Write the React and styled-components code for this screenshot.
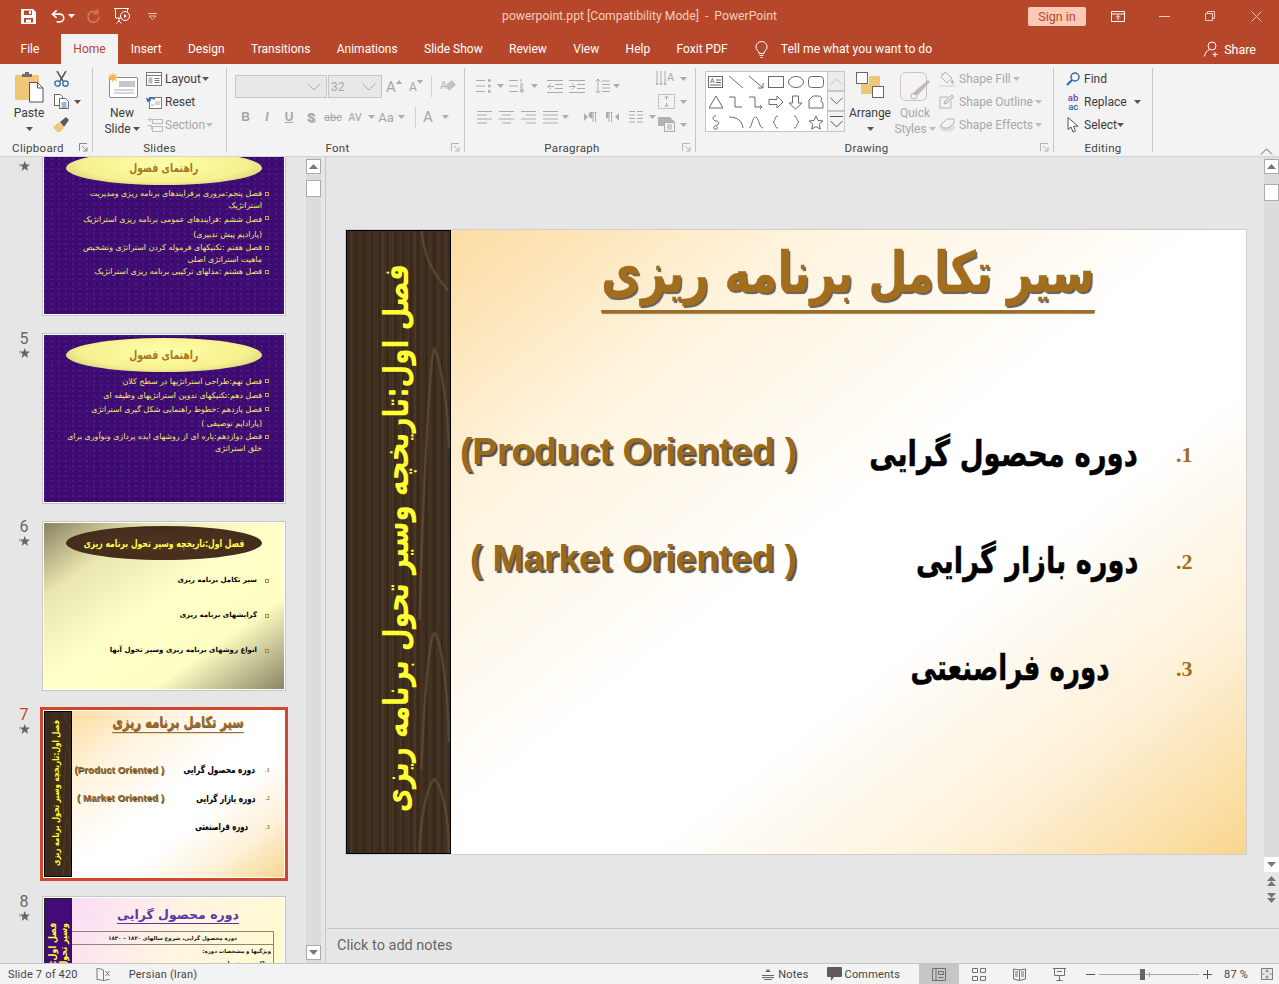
import React from 'react';
import styled, { createGlobalStyle } from 'styled-components';

const ACCENT = '#b7472a';
const PANEL = '#e6e6e6';
const LINE = '#c6c6c6';
const UI_FONT = 'Roboto, "Open Sans", "Liberation Sans", sans-serif';
const FA_FONT = '"DejaVu Sans", "Liberation Sans", sans-serif';

const Global = createGlobalStyle`
  html, body { margin: 0; height: 100%; overflow: hidden; }
  body { font-family: ${UI_FONT}; font-size: 12px; color: #3c3c3c; }
  #root { height: 100%; }
`;

const Page = styled.div`
  display: flex;
  flex-direction: column;
  height: 100vh;
  width: 100vw;
  overflow: hidden;
`;

/* ---------- title bar ---------- */
const TitleBar = styled.div`
  display: grid;
  grid-template-columns: 1fr auto 1fr;
  align-items: center;
  height: 32px;
  flex: 0 0 32px;
  background: ${ACCENT};
`;
const Qat = styled.div`
  display: flex;
  align-items: center;
  padding-left: 21px;
`;
const QatItem = styled.div`
  display: flex;
  align-items: center;
  justify-content: center;
  width: ${p => p.$w}px;
  margin-left: ${p => p.$ml ?? 0}px;
`;
const DocTitle = styled.div`
  color: #f6cdbd;
  font-size: 12.2px;
  white-space: pre;
`;
const WinControls = styled.div`
  display: flex;
  align-items: center;
  justify-content: flex-end;
`;
const SignIn = styled.div`
  width: 58px;
  height: 19px;
  line-height: 19px;
  text-align: center;
  background: #fcc9b6;
  color: ${ACCENT};
  border-radius: 2px;
  font-size: 12.5px;
  margin-right: 9px;
`;
const WinButton = styled.div`
  width: 46px;
  display: flex;
  justify-content: center;
`;

/* ---------- tabs ---------- */
const TabRow = styled.div`
  display: flex;
  align-items: flex-end;
  height: 32px;
  flex: 0 0 32px;
  background: ${ACCENT};
  padding-left: 7px;
`;
const Tab = styled.div`
  height: 30px;
  line-height: 30px;
  padding: 0 ${p => p.$pad ?? 13.2}px;
  margin-right: ${p => p.$mr ?? 0}px;
  color: ${p => (p.$active ? ACCENT : '#fff')};
  background: ${p => (p.$active ? '#f3f3f3' : 'transparent')};
  font-size: 12px;
  white-space: nowrap;
`;
const TellMe = styled.div`
  display: flex;
  align-items: center;
  gap: 13px;
  height: 30px;
  margin-left: 14px;
  color: #fff;
  font-size: 12.2px;
`;
const Share = styled.div`
  display: flex;
  align-items: center;
  gap: 5px;
  height: 30px;
  margin-left: auto;
  padding-right: 23px;
  color: #fff;
  font-size: 12.5px;
`;

/* ---------- ribbon ---------- */
const Ribbon = styled.div`
  display: flex;
  height: 93px;
  flex: 0 0 93px;
  background: #f3f3f3;
  border-bottom: 1px solid #d4d4d4;
  box-sizing: border-box;
`;
const Group = styled.div`
  display: flex;
  flex-direction: column;
  width: ${p => p.$w}px;
  flex: 0 0 auto;
`;
const GroupBody = styled.div`
  display: flex;
  height: 76px;
  padding-left: ${p => p.$pl ?? 0}px;
`;
const GroupLabel = styled.div`
  display: flex;
  align-items: center;
  justify-content: center;
  height: 16px;
  position: relative;
  padding-right: ${p => (p.$launch ? 16 : 0)}px;
  font-size: 11.5px;
  letter-spacing: 0.3px;
  color: #444;
`;
const Launcher = styled.svg`
  position: absolute;
  right: 4px;
  top: 3px;
`;
const Sep = styled.div`
  width: 1px;
  height: 84px;
  margin-top: 4px;
  background: ${LINE};
  flex: 0 0 auto;
`;
const Collapse = styled.div`
  margin-left: auto;
  align-self: flex-end;
  padding: 0 6px 1px 0;
  line-height: 0;
`;
const BigButton = styled.div`
  display: flex;
  flex-direction: column;
  align-items: center;
  width: ${p => p.$w}px;
  margin-left: ${p => p.$ml ?? 0}px;
  padding-top: 8px;
  color: ${p => (p.$off ? '#a8a8a8' : '#3c3c3c')};
`;
const BigIcon = styled.div`
  height: 33px;
  display: flex;
  align-items: flex-start;
  justify-content: center;
`;
const BigText = styled.div`
  height: 16px;
  line-height: 16px;
  display: flex;
  align-items: center;
  gap: 2px;
  white-space: nowrap;
`;
const SmallCol = styled.div`
  display: flex;
  flex-direction: column;
  padding-top: 3px;
  margin-left: ${p => p.$ml ?? 0}px;
`;
const SmallBtn = styled.div`
  display: flex;
  align-items: center;
  height: 23px;
  gap: ${p => p.$gap ?? 3}px;
  color: ${p => (p.$off ? '#a8a8a8' : '#3c3c3c')};
  white-space: nowrap;
`;
const SmallIcon = styled.span`
  display: flex;
  justify-content: center;
  width: ${p => p.$w ?? 20}px;
`;
const Rows = styled.div`
  display: flex;
  flex-direction: column;
  padding-top: ${p => p.$top}px;
  width: ${p => p.$w}px;
`;
const ToolRow = styled.div`
  display: flex;
  align-items: center;
  height: ${p => p.$h ?? 22}px;
  margin-bottom: ${p => p.$mb ?? 0}px;
`;
const Combo = styled.div`
  display: flex;
  align-items: center;
  justify-content: flex-end;
  box-sizing: border-box;
  width: ${p => p.$w}px;
  height: 23px;
  margin-right: 1px;
  padding-right: 5px;
  background: #e8e8e8;
  border: 1px solid ${LINE};
  color: #a8a8a8;
`;
const ComboValue = styled.span`
  margin-right: auto;
  padding-left: 2px;
`;
const Cell = styled.div`
  display: flex;
  align-items: center;
  justify-content: center;
  width: ${p => p.$w}px;
  margin-left: ${p => p.$ml ?? 0}px;
  color: #a6a6a6;
  font-size: ${p => p.$fs ?? 12}px;
  font-weight: ${p => (p.$bold ? 700 : 400)};
  font-style: ${p => (p.$italic ? 'italic' : 'normal')};
  text-decoration: ${p => p.$deco ?? 'none'};
  font-family: ${p => (p.$serif ? '"Liberation Sans", sans-serif' : 'inherit')};
  text-shadow: ${p => (p.$shadow ? '1px 1px 1px #bbb' : 'none')};
`;
const RowRule = styled.div`
  width: 1px;
  height: 21px;
  background: #d0d0d0;
  margin-left: ${p => p.$ml ?? 0}px;
`;
const Gallery = styled.div`
  display: flex;
  height: 61px;
  margin-top: 7px;
`;
const GalleryGrid = styled.div`
  display: grid;
  grid-template-columns: repeat(6, 20px);
  grid-auto-rows: 20px;
  box-sizing: border-box;
  width: 123px;
  height: 61px;
  background: #fff;
  border: 1px solid ${LINE};
  place-items: center;
`;
const GalleryArrows = styled.div`
  display: flex;
  flex-direction: column;
  width: 17px;
`;
const GalleryArrow = styled.div`
  display: flex;
  align-items: center;
  justify-content: center;
  box-sizing: border-box;
  height: ${p => p.$h}px;
  background: ${p => (p.$dim ? '#ececec' : '#f3f3f3')};
  border: 1px solid ${LINE};
  border-left-width: 0;
`;
const AbIcon = styled.span`
  display: flex;
  flex-direction: column;
  align-items: flex-end;
  font-size: 9.5px;
  line-height: 9px;
  font-weight: 500;
  color: #7a3f9a;
`;
const AcText = styled.span`
  color: #2b6cb0;
`;

/* ---------- main ---------- */
const Workspace = styled.div`
  display: flex;
  flex: 1 1 auto;
  min-height: 0;
  background: ${PANEL};
`;
const SlidePanel = styled.div`
  display: flex;
  width: 326px;
  flex: 0 0 326px;
  box-sizing: border-box;
  border-right: 1px solid ${LINE};
  padding-right: 4px;
  margin-right: 1px;
`;
const ThumbList = styled.div`
  flex: 1 1 auto;
  overflow: hidden;
  min-width: 0;
`;
const ThumbInner = styled.div`
  margin-top: -10.5px;
`;
const ThumbRow = styled.div`
  display: flex;
  height: 187.7px;
`;
const NumCol = styled.div`
  display: flex;
  flex-direction: column;
  align-items: center;
  width: 43px;
  flex: 0 0 43px;
  box-sizing: border-box;
  padding-left: 5px;
  color: ${p => (p.$active ? '#c8452a' : '#666')};
  font-size: 16px;
  line-height: 18px;
  margin-top: -4px;
`;
const NumStar = styled.svg`
  flex: 0 0 auto;
`;
const ThumbFrame = styled.div`
  width: 240px;
  height: 166.4px;
  border: 1px solid #fff;
  box-shadow: 0 0 0 ${p => (p.$active ? '3px #d0472b' : `1px ${LINE}`)};
  overflow: hidden;
  flex: 0 0 auto;
`;
const VScroll = styled.div`
  display: flex;
  flex-direction: column;
  align-items: center;
  width: 15px;
  flex: 0 0 15px;
  padding: 2px 0 3px;
  box-sizing: border-box;
  background: #dcdcdc;
`;
const ScrollBtn = styled.div`
  display: flex;
  align-items: center;
  justify-content: center;
  box-sizing: border-box;
  width: 15px;
  height: 15px;
  background: #fff;
  border: 1px solid ${p => (p.$plain ? '#fff' : '#ababab')};
  flex: 0 0 auto;
`;
const ScrollThumb = styled.div`
  box-sizing: border-box;
  width: 15px;
  height: 17px;
  margin-top: ${p => p.$mt}px;
  background: #fff;
  border: 1px solid #ababab;
`;
const ScrollSpace = styled.div`
  flex: 1 1 auto;
`;
const StepBtn = styled.div`
  display: flex;
  justify-content: center;
  align-items: center;
  width: 15px;
  height: 17px;
  background: ${PANEL};
`;
const EditorCol = styled.div`
  display: flex;
  flex-direction: column;
  flex: 1 1 auto;
  min-width: 0;
`;
const EditorTop = styled.div`
  display: flex;
  height: 771px;
  flex: 0 0 771px;
`;
const SlideArea = styled.div`
  flex: 1 1 auto;
  padding: 73px 0 0 19px;
`;
const StepBar = styled.div`
  display: flex;
  flex-direction: column;
  width: 15px;
  flex: 0 0 15px;
`;
const ScrollTrack = styled.div`
  display: flex;
  flex-direction: column;
  align-items: center;
  height: 715px;
  padding-top: 2px;
  box-sizing: border-box;
  background: #dcdcdc;
`;
const NotesBar = styled.div`
  flex: 1 1 auto;
  border-top: 1px solid ${LINE};
  padding: 8px 0 0 10px;
  font-size: 14.5px;
  color: #666;
`;

/* ---------- slide ---------- */
const SlideBox = styled.div`
  display: flex;
  width: 900px;
  height: 624px;
  background: #fff;
  box-shadow: 0 0 0 1px #cfcfcf;
  zoom: ${p => p.$zoom ?? 1};
`;
const WoodBand = styled.div`
  position: relative;
  display: flex;
  justify-content: center;
  box-sizing: border-box;
  width: 105px;
  height: 624px;
  flex: 0 0 105px;
  border: 1px solid #000;
  background: #3d2c1d;
  overflow: hidden;
`;
const WoodArt = styled.svg`
  position: absolute;
  inset: 0;
  width: 100%;
  height: 100%;
`;
/* the source font is a condensed one: DejaVu gets squeezed along the line */
const SideSqueeze = styled.div`
  position: relative;
  align-self: flex-start;
  margin-top: ${p => p.$top}px;
  margin-right: ${p => p.$mr ?? 0}px;
  transform-origin: top center;
  transform: scaleY(${p => p.$sy});
`;
const SideText = styled.div`
  writing-mode: vertical-rl;
  transform: rotate(180deg);
  direction: rtl;
  white-space: nowrap;
  font: 700 ${p => p.$fs}px/1.1 ${FA_FONT};
  color: #ffff33;
`;
const SlideBody = styled.div`
  flex: 0 0 795px;
  width: 795px;
  min-width: 0;
  display: flex;
  flex-direction: column;
  background: linear-gradient(142deg, #fcdca2 0%, #fff3dc 22%, #ffffff 48%, #ffffff 62%, #fdf0d6 82%, #f9d68e 100%);
`;
const TitleWrap = styled.div`
  display: flex;
  justify-content: flex-end;
  height: 171.5px;
  padding-right: 151px;
  box-sizing: border-box;
`;
const SlideTitle = styled.div`
  height: 80px;
  border-bottom: 3px solid #a26d1c;
  box-shadow: 0 2px 1px -1px rgba(0, 0, 0, 0.45);
  transform-origin: right center;
  transform: scaleX(0.775);
  font: 700 56px/86px ${FA_FONT};
  -webkit-text-stroke: 0.5px #a26d1c;
  color: #a26d1c;
  text-shadow: 2px 2px 1px #5f5f5f;
  white-space: nowrap;
`;
const TopicRow = styled.div`
  display: flex;
  align-items: center;
  height: 107px;
  padding-left: ${p => p.$pl ?? 0}px;
  padding-right: 54px;
`;
const TopicEn = styled.div`
  margin-bottom: 8px;
  font: 700 37px/1 "Liberation Sans", Arial, sans-serif;
  color: #9a6a1c;
  text-shadow: 2px 2px 1px #4d4d4d;
  white-space: nowrap;
  flex: 0 0 auto;
`;
const TopicFa = styled.div`
  flex: 0 1 auto;
  min-width: 0;
  margin-left: auto;
  margin-right: ${p => p.$mr}px;
  margin-bottom: 3px;
  transform-origin: right center;
  transform: scaleX(${p => p.$sx});
  font: 700 36px/1 ${FA_FONT};
  -webkit-text-stroke: 0.5px #000;
  color: #000;
  text-shadow: 1px 1px 1px #fff;
  white-space: nowrap;
`;
const TopicNum = styled.div`
  width: 16px;
  flex: 0 0 16px;
  font: 700 22px/1 "Liberation Serif", serif;
  color: #a26d1c;
`;

/* ---------- small thumbnails ---------- */
const MiniSlide = styled.div`
  display: flex;
  flex-direction: column;
  align-items: center;
  width: 240px;
  height: 166.4px;
  padding-top: 3px;
  box-sizing: border-box;
  background: ${p => p.$bg};
`;
const Ellipse = styled.div`
  display: flex;
  align-items: center;
  justify-content: center;
  width: 196px;
  height: 34px;
  flex: 0 0 auto;
  border-radius: 50%;
  background: ${p => p.$bg};
  color: ${p => p.$color};
  font: 700 ${p => p.$fs}px/1 ${FA_FONT};
  white-space: nowrap;
`;
const EllipseText = styled.span`
  display: inline-block;
  transform: scaleX(${p => p.$sx});
`;
const BulletList = styled.div`
  align-self: stretch;
  display: flex;
  flex-direction: column;
  padding: ${p => p.$top}px 15px 0 0;
  gap: ${p => p.$gap ?? 0}px;
`;
const BulletItem = styled.div`
  display: flex;
  align-items: flex-start;
  gap: ${p => p.$gap ?? 3}px;
  color: ${p => p.$color};
  font: ${p => (p.$bold ? 700 : 400)} ${p => p.$fs}px/${p => p.$lh}px ${FA_FONT};
  white-space: nowrap;
`;
const BulletMark = styled.span`
  width: 2px;
  height: 2px;
  border: 1px solid ${p => p.$color};
  margin-top: ${p => p.$mt ?? 4}px;
  flex: 0 0 auto;
`;
const BulletText = styled.div`
  display: flex;
  flex-direction: column;
`;
const PurpleBand = styled.div`
  display: flex;
  justify-content: center;
  box-sizing: border-box;
  width: 28px;
  height: 166px;
  flex: 0 0 28px;
  border: 1px solid #222;
  background: #430a78;
  overflow: hidden;
`;
const Mini8Body = styled.div`
  flex: 1 1 auto;
  display: flex;
  flex-direction: column;
  align-items: center;
  background: linear-gradient(120deg, #fbdcf7 0%, #fff4e2 40%, #ffffc4 100%);
`;
const Mini8Title = styled.div`
  margin-top: 8px;
  border-bottom: 1px solid #5a36a8;
  color: #5a36a8;
  font: 700 12.5px/17px ${FA_FONT};
  white-space: nowrap;
`;
const Mini8Table = styled.div`
  align-self: stretch;
  margin: 7px 10px 0 0;
  border: 1px solid #8a8576;
  border-left: 0;
  color: #111;
  font: 700 5.4px/10px ${FA_FONT};
`;
const Mini8Cell = styled.div`
  text-align: ${p => p.$align ?? 'center'};
  padding: 1px 2px;
  border-top: ${p => (p.$rule ? '1px solid #8a8576' : '0')};
  white-space: nowrap;
`;
const Mini8Row = styled.div`
  display: flex;
  width: 240px;
  height: 166.4px;
  background: #fff;
`;

/* ---------- status bar ---------- */
const StatusBar = styled.div`
  display: flex;
  align-items: center;
  height: 21px;
  flex: 0 0 21px;
  background: #f3f3f3;
  border-top: 1px solid ${LINE};
  box-sizing: border-box;
  font-size: 11px;
  color: #444;
  letter-spacing: 0.2px;
`;
const StatusText = styled.span`
  margin-left: ${p => p.$ml ?? 0}px;
  display: flex;
  align-items: center;
  gap: ${p => p.$gap ?? 0}px;
  white-space: nowrap;
`;
const StatusPush = styled.div`
  flex: 1 1 auto;
`;
const ViewGroup = styled.div`
  display: flex;
  height: 100%;
  margin-left: ${p => p.$ml}px;
`;
const ViewBtn = styled.div`
  display: flex;
  align-items: center;
  justify-content: center;
  width: 40px;
  height: 100%;
  background: ${p => (p.$on ? LINE : 'transparent')};
`;
const ZoomTrack = styled.div`
  position: relative;
  width: 100px;
  height: 1px;
  background: #a8a8a8;
  margin: 0 4px;
`;
const ZoomThumb = styled.div`
  position: absolute;
  left: 41px;
  top: -5px;
  width: 5px;
  height: 11px;
  background: #666;
`;
const ZoomTick = styled.div`
  position: absolute;
  left: 50px;
  top: -2px;
  width: 1px;
  height: 5px;
  background: #a8a8a8;
`;
const FitSlot = styled.span`
  display: flex;
  margin-left: 13px;
  padding-right: 6px;
`;

/* ---------- icons ---------- */
const Caret = ({ c = '#555', ml = 0 }) => (
  <svg width="7" height="4" style={{ marginLeft: ml, flex: 'none' }}><path d="M0 0h7L3.5 4z" fill={c} /></svg>
);
const Off = '#ababab';
const SaveIcon = () => (
  <svg width="15" height="15" viewBox="0 0 15 15"><path fillRule="evenodd" fill="#fff" d="M0 0h12l3 3v12H0zM3 1.5V6h8V1.5zM3 9v4.5h9V9zM8 2h2v3H8z" /><path fill="#fff" d="M5 10.5h5v3H5z" /></svg>
);
const UndoIcon = () => (
  <svg width="16" height="15" viewBox="0 0 16 15" fill="none" stroke="#fff" strokeWidth="1.7"><path d="M6 1L1.5 5 6 9" /><path d="M2 5h7.5a4 4 0 0 1 0 8.2H6" /></svg>
);
const RedoIcon = () => (
  <svg width="15" height="15" viewBox="0 0 15 15" fill="none" stroke="#cd7a63" strokeWidth="1.7"><path d="M11 3.5A5.5 5.5 0 1 0 13 8" /><path d="M11.5 0v4.3H7.2" /></svg>
);
const PresentIcon = () => (
  <svg width="17" height="18" viewBox="0 0 17 18" fill="none" stroke="#fff"><path d="M0 1.5h15M1.5 1.5v9.5h6M5 11v3M2.5 16.5L5 14l2.5 2.5M13.5 1.5v3" /><circle cx="11" cy="9" r="4.5" /><path d="M10 7l3 2-3 2z" fill="#fff" stroke="none" /></svg>
);
const CustomizeIcon = () => (
  <svg width="9" height="7" viewBox="0 0 9 7" fill="none" stroke="#f0bfae"><path d="M0 .5h9M1 3l3.5 3.5L8 3z" /></svg>
);
const WinRibbon = () => (
  <svg width="14" height="11" fill="none" stroke="#fff"><path d="M.5.5h13v10H.5zM.5 3h13M7 9V4.5M5 6.5l2-2 2 2" /></svg>
);
const WinMin = () => <svg width="11" height="1"><path d="M0 .5h11" stroke="#f6cdbd" /></svg>;
const WinRestore = () => (
  <svg width="10" height="10" fill="none" stroke="#f6cdbd"><path d="M.5 2.5h7v7h-7zM2.5 2.5v-2h7v7h-2" /></svg>
);
const WinClose = () => (
  <svg width="11" height="11" stroke="#f0bfae" strokeWidth="1"><path d="M.5.5l10 10M10.5.5l-10 10" /></svg>
);
const BulbIcon = () => (
  <svg width="13" height="17" viewBox="0 0 13 17" fill="none" stroke="#fff"><path d="M4 11C2.5 9.5 1 8.5 1 6a5.5 5.5 0 0 1 11 0c0 2.5-1.5 3.5-3 5v1.5H4zM4.5 14.5h4M5.5 16.5h2" /></svg>
);
const ShareIcon = () => (
  <svg width="15" height="16" viewBox="0 0 15 16" fill="none" stroke="#fff"><circle cx="8" cy="5" r="4" /><path d="M.5 15.5c.5-3.500 2.500-6 5-7M11 11v5M8.500 13.500h5" /></svg>
);
const PasteIcon = () => (
  <svg width="29" height="31" viewBox="0 0 29 31"><rect y="3" width="24" height="25" rx="1" fill="#f0c777" /><path d="M7 5V2h3V0h4v2h3v3z" fill="#6e6e6e" /><path d="M14.500 10.500h8l5.500 5.500v14H14.500z" fill="#fff" stroke="#555" /><path d="M22.500 10.500v5.500H28" fill="none" stroke="#555" /></svg>
);
const CutIcon = () => (
  <svg width="15" height="16" viewBox="0 0 15 16" fill="none"><path d="M3 0l6 10M12 0L6 10" stroke="#555" strokeWidth="1.500" /><circle cx="3.500" cy="12.500" r="2.700" stroke="#2b6cb0" strokeWidth="1.300" /><circle cx="11.500" cy="12.500" r="2.700" stroke="#2b6cb0" strokeWidth="1.300" /></svg>
);
const CopyIcon = () => (
  <svg width="15" height="15" viewBox="0 0 15 15" fill="none" stroke="#666"><path d="M.5.500h6l2 2v9h-8z" fill="#fff" /><path d="M5.500 4.500h6l3 3v7h-9z" fill="#fff" /><path d="M7.500 9h5M7.500 11h5M7.500 13h5" stroke="#2b6cb0" /></svg>
);
const PainterIcon = () => (
  <svg width="16" height="15" viewBox="0 0 16 15"><path d="M0 10l6-5 5 6-4 4H4z" fill="#f0c777" /><path d="M7 5l6-5 3 3-5 7z" fill="#5b5b5b" /></svg>
);
const NewSlideIcon = () => (
  <svg width="31" height="26" viewBox="0 0 31 26"><rect x="2.500" y="5.500" width="28" height="20" rx="1.500" fill="#fff" stroke="#8a8a8a" /><rect x="12" y="9" width="16" height="6" fill="#c8c8c8" /><path d="M7 18h20M7 21h20" stroke="#aaa" /><path d="M6 0l1 3.500L10 1 8.500 4.500 12 5 8.500 6.500 10 10 7 7.500 6 11 5 7.500 2 10l1.500-3.500L0 5l3.500-.5L2 1l3 2.500z" fill="#f0b94d" /></svg>
);
const LayoutIcon = () => (
  <svg width="16" height="14" viewBox="0 0 16 14" fill="none" stroke="#777"><rect x=".5" y=".5" width="15" height="13" fill="#fff" /><path d="M.5 3.500h15" /><rect x="2.500" y="5.500" width="4" height="6" fill="#bbb" stroke="none" /><path d="M8.500 6.500h5M8.500 8.500h5M8.500 10.500h5" /></svg>
);
const ResetIcon = () => (
  <svg width="16" height="14" viewBox="0 0 16 14" fill="none"><rect x="3.500" y="2.500" width="12" height="11" fill="#fff" stroke="#777" /><path d="M9 7h5M9 9h5M5 10h3" stroke="#aaa" /><path d="M9 4.500C6 2 3 2.500 2 6M.5 3l1.500 3.300 3-1.600" stroke="#2b6cb0" strokeWidth="1.400" /></svg>
);
const SectionIcon = () => (
  <svg width="17" height="15" viewBox="0 0 17 15" fill="none" stroke="#bbb"><path d="M4 0v5M1.500 2.500h5" /><rect x="6.500" y="2.500" width="10" height="4" /><rect x="6.500" y="9.500" width="10" height="5" /><path d="M1.500 8.500h4v4" /></svg>
);
const Launch = ({ c = '#888' }) => (
  <Launcher width="9" height="9" viewBox="0 0 9 9" fill="none" stroke={c}><path d="M.5 8V.5H8M3 3l4.500 4.500M8 4v4H4" /></Launcher>
);
const ChevDown = ({ c = '#aaa', w = 14 }) => (
  <svg width={w} height="8" viewBox="0 0 14 8" fill="none" stroke={c}><path d="M.5.500L7 7l6.500-6.500" /></svg>
);
const ChevUp = ({ c = '#555', w = 13 }) => (
  <svg width={w} height="7" viewBox="0 0 14 8" fill="none" stroke={c}><path d="M.5 7.500L7 1l6.500 6.500" /></svg>
);

const Lines = ({ d, w = 15, h = 13 }) => (
  <svg width={w} height={h} viewBox={`0 0 ${w} ${h}`} fill="none" stroke={Off}><path d={d} /></svg>
);
const GrowA = ({ dir, size }) => (
  <Cell $w={22} $fs={size}>A<svg width="6" height="4" style={{ marginBottom: 10 }}><path d={dir === 'up' ? 'M0 4h6L3 0z' : 'M0 0h6L3 4z'} fill={Off} /></svg></Cell>
);
const EraserIcon = () => (
  <svg width="16" height="16" viewBox="0 0 16 16"><path d="M6 6l6-5 4 5-7 6z" fill="#c3c3c3" /><text x="0" y="10" fontSize="11" fill="#b4b4b4" fontFamily="Roboto">A</text></svg>
);
const BulletsIcon = () => (
  <svg width="15" height="14" viewBox="0 0 15 14" fill="none" stroke={Off}><path d="M0 1.500h9M0 7h9M0 12.500h9" /><path d="M12 1.500h2.500M12 7h2.500M12 12.500h2.500" strokeWidth="2.500" /></svg>
);
const NumbersIcon = () => (
  <svg width="15" height="14" viewBox="0 0 15 14" fill="none" stroke={Off}><path d="M0 1.500h9M0 7h9M0 12.500h9M12 0v3M11 5h3l-3 3h3M11 10h3v3h-3M11 11.500h3" /></svg>
);
const OutdentIcon = () => (
  <svg width="16" height="13" viewBox="0 0 16 13" fill="none" stroke={Off}><path d="M0 .5h16M8 4.500h8M8 8.500h8M0 12.500h16M7 6.500H1M4 3.500L1 6.500l3 3" /></svg>
);
const IndentIcon = () => (
  <svg width="16" height="13" viewBox="0 0 16 13" fill="none" stroke={Off}><path d="M0 .5h16M8 4.500h8M8 8.500h8M0 12.500h16M0 6.500h6M3 3.500l3 3-3 3" /></svg>
);
const LineSpacingIcon = () => (
  <svg width="15" height="16" viewBox="0 0 15 16" fill="none" stroke={Off}><path d="M3 1v14M.5 3.500L3 1l2.500 2.500M.5 12.500L3 15l2.500-2.500M7 3h8M7 6.500h8M7 10h8M7 13.500h8" /></svg>
);
const DirIcon = () => (
  <svg width="20" height="16" viewBox="0 0 20 16" fill="none" stroke={Off}><path d="M1 0v14M5 0v14M9 0v14M0 12l1 2 1-2M4 12l1 2 1-2M8 12l1 2 1-2" /><text x="11" y="10" fontSize="11" fill={Off} stroke="none" fontFamily="Roboto">A</text></svg>
);
const AlignTextIcon = () => (
  <svg width="17" height="15" viewBox="0 0 17 15" fill="none" stroke={Off}><rect x=".5" y=".5" width="16" height="14" strokeDasharray="2 1" /><path d="M8.500 2v4M6.500 4l2-2 2 2M8.500 13V9M6.500 11l2 2 2-2" /></svg>
);
const SmartIcon = () => (
  <svg width="17" height="15" viewBox="0 0 17 15" fill="none"><path d="M0 0h12l5 5H7v4H0z" fill="#b2b2b2" /><rect x="6.500" y="5.500" width="10" height="9" fill="#f3f3f3" stroke={Off} /><path d="M9 8h5M9 10h5M9 12h5" stroke={Off} /></svg>
);
const ColumnsIcon = () => <Lines w={14} h={12} d="M0 .5h6M8 .5h6M0 4h6M8 4h6M0 7.500h6M8 7.500h6M0 11h6M8 11h6" />;
const AlignL = () => <Lines d="M0 .5h15M0 4h10M0 8h15M0 12h10" />;
const AlignC = () => <Lines d="M0 .5h15M3 4h9M0 8h15M3 12h9" />;
const AlignR = () => <Lines d="M0 .5h15M5 4h10M0 8h15M5 12h10" />;
const AlignJ = () => <Lines d="M0 .5h15M0 4h15M0 8h15M0 12h15" />;
const LtrIcon = () => (
  <svg width="13" height="10" viewBox="0 0 13 10"><path d="M0 1l4 4-4 4z" fill={Off} /><path d="M8 0h5M8 0a3 3 0 0 0 0 6zM9 0v10M11.500 0v10" fill={Off} stroke={Off} /></svg>
);
const RtlIcon = () => (
  <svg width="13" height="10" viewBox="0 0 13 10"><path d="M13 1L9 5l4 4z" fill={Off} /><path d="M2 0h5M2 0a3 3 0 0 0 0 6zM3 0v10M5.500 0v10" fill={Off} stroke={Off} /></svg>
);

const shapePaths = [
  <g key="tb"><rect x=".5" y="1.500" width="14" height="11" fill="#fff" /><path d="M8 5h5M8 7.500h5M2 10h11" /><text x="2" y="8" fontSize="7" fill="#2b6cb0" stroke="none" fontFamily="Roboto">A</text></g>,
  <path key="l" d="M1 1l14 12" />,
  <path key="la" d="M1 1l14 12M15 8v5h-5" />,
  <rect key="r" x=".5" y="1.500" width="15" height="11" />,
  <ellipse key="e" cx="8" cy="7" rx="7.500" ry="5.500" />,
  <rect key="rr" x=".5" y="1.500" width="15" height="11" rx="3" />,
  <path key="t" d="M8 1l7 12H1z" />,
  <path key="el" d="M1 2h6v10h7" />,
  <path key="ela" d="M1 2h6v10h7M12 10l2 2-2 2" />,
  <path key="ra" d="M1 4.500h8V1l6 6-6 6V9.500H1z" />,
  <path key="da" d="M4.500 1h6v7H14l-6.500 6L1 8h3.500z" />,
  <path key="fc" d="M1 5l4-4h5c4 0 4.500 4 2.500 5L15 8v5H1z" />,
  <path key="ff" d="M8 1C3 1 5 6 8 6s4 3 1 4-5 3-2 4c3 1 3-2 1-3" />,
  <path key="ar" d="M1 2c7 0 13 3 14 11" />,
  <path key="cu" d="M1 13C4 13 4 2 7.500 2S11 13 15 13" />,
  <path key="lb" d="M10 1C6 1 8 6 5 7c3 1 1 6 5 6" />,
  <path key="rb" d="M6 1c4 0 2 5 5 6-3 1-1 6-5 6" />,
  <path key="st" d="M8 1l2 4.500 5 .5-3.800 3.300 1.200 4.900L8 11.500l-4.400 2.700 1.200-4.900L1 6l5-.5z" />,
];
const ArrangeIcon = () => (
  <svg width="28" height="26" viewBox="0 0 28 26"><rect x="13" y="4" width="11" height="10" fill="#f0c777" /><rect x="5" y="12" width="11" height="10" fill="#f0c777" /><rect x=".5" y=".5" width="11" height="11" fill="#fff" stroke="#666" /><rect x="16.500" y="14.500" width="11" height="11" fill="#fff" stroke="#666" /></svg>
);
const QuickIcon = () => (
  <svg width="30" height="30" viewBox="0 0 30 30"><rect x=".5" y=".5" width="26" height="28" rx="5" fill="#f6f1f4" stroke="#c4c4c4" /><path d="M13 23l2-4 13-11 2 2-12 13z" fill="#bdbdbd" /><circle cx="14" cy="24" r="3" fill="none" stroke="#bdbdbd" /></svg>
);
const FillIcon = () => (
  <svg width="16" height="16" viewBox="0 0 16 16" fill="none" stroke="#b4b4b4"><path d="M6 1l7 6-5 5-6-6zM4 4l-2-2" /><path d="M0 14h16v2H0z" fill="#e0e0e0" stroke="none" /><path d="M13 9c1 1.500 2 2.500 1 3.500-1 .5-2-1-1-3.500z" fill="#c4c4c4" /></svg>
);
const OutlineIcon = () => (
  <svg width="16" height="15" viewBox="0 0 16 15" fill="none" stroke="#b4b4b4"><path d="M9 3H1v11h11V7" /><path d="M5 10l1-3 7-6 2 2-7 6z" fill="#e0e0e0" /></svg>
);
const EffectsIcon = () => (
  <svg width="16" height="15" viewBox="0 0 16 15"><ellipse cx="8" cy="10" rx="8" ry="4.500" fill="#dedede" /><path d="M2 8l6-6h7v4l-6 5H4z" fill="#f5f5f5" stroke="#b4b4b4" /></svg>
);
const FindIcon = () => (
  <svg width="14" height="14" viewBox="0 0 14 14" fill="none" stroke="#2b6cb0" strokeWidth="1.500"><circle cx="9" cy="5" r="4" /><path d="M6 8l-5 5" strokeWidth="2.200" /></svg>
);
const SelectIcon = () => (
  <svg width="13" height="16" viewBox="0 0 13 16" fill="#fff" stroke="#555"><path d="M1 .5v12l3-2.500 2 5 2.500-1-2-4.800H11z" /></svg>
);
const Star = () => (
  <NumStar width="11" height="10" viewBox="0 0 11 10"><path d="M5.800 0l1.300 3.500H11L8 6l1 4-3.200-2.400L2.600 10l1-4L1 3.500h3.400z" fill="#666" /><path d="M0 3.500h1M0 5h1.500" stroke="#666" strokeWidth=".6" /></NumStar>
);
const TriUp = ({ c = '#777' }) => <svg width="9" height="5"><path d="M0 5h9L4.500 0z" fill={c} /></svg>;
const TriDown = ({ c = '#777' }) => <svg width="9" height="5"><path d="M0 0h9L4.500 5z" fill={c} /></svg>;
const DblUp = () => <svg width="9" height="10"><path d="M0 5h9L4.500 0zM0 10h9L4.500 5z" fill="#777" /></svg>;
const DblDown = () => <svg width="9" height="10"><path d="M0 0h9L4.500 5zM0 5h9L4.500 10z" fill="#777" /></svg>;

const NotesIcon = () => <svg width="12" height="12" fill="none" stroke="#666"><path d="M0 7.500h12M0 9.500h12M2 11.500h8" /><path d="M3 4l3-3 3 3z" fill="#666" stroke="none" /></svg>;
const CommentIcon = () => <svg width="15" height="14"><path d="M1 0h13a1 1 0 0 1 1 1v8a1 1 0 0 1-1 1H7l-3 4v-4H1a1 1 0 0 1-1-1V1a1 1 0 0 1 1-1z" fill="#5f5a56" /></svg>;
const SpellIcon = () => <svg width="15" height="13" fill="none" stroke="#777"><path d="M7.500 2C6 1 3 .5 1 .5v11c2 0 5 .5 6.500 1.500 1.500-1 4-1.500 6-1.500" /><path d="M7.500 2v11M9.500 3l4 5M13.500 3l-4 5" /></svg>;
const NormalIcon = () => <svg width="14" height="13" fill="none" stroke="#6f6f6f"><path d="M.5.500h13v12H.5zM4 .5v12M6.500 3.500h5v3h-5zM6.500 9.500h5" /></svg>;
const SorterIcon = () => <svg width="14" height="13" fill="none" stroke="#6f6f6f"><path d="M.5.500h5v4h-5zM8.500.500h5v4h-5zM.5 8.500h5v4h-5zM8.500 8.500h5v4h-5z" /></svg>;
const ReadingIcon = () => <svg width="13" height="13" fill="none" stroke="#6f6f6f"><path d="M.5 1l6 1 6-1v10l-6 1.500L.5 11zM6.500 2v10.500M2 4h3M2 6h3M2 8h3M8 4h3M8 6h3M8 8h3" /></svg>;
const ShowIcon = () => <svg width="13" height="13" fill="none" stroke="#6f6f6f"><path d="M0 .5h13M1.500.5v7h10v-7M6.500 7.500v4.500M3.500 12.500h6M4 3.500h5" /></svg>;
const FitIcon = () => <svg width="12" height="12" fill="#e8e8e8" stroke="#7d7d7d"><path d="M.5.500h11v11H.5z" /><path d="M6 1.500v3M4.500 3h3M6 7.500v3M4.500 9h3M1.500 6h2M8.500 6h2" fill="none" /></svg>;

/* ---------- wood texture ---------- */
const streaks = Array.from({ length: 90 }, (_, i) => ({
  x: (i * 37) % 103,
  o: 0.05 + ((i * 13) % 10) * 0.012,
  light: i % 3 !== 0,
  w: 0.5 + ((i * 7) % 4) * 0.3,
}));
const WoodTexture = () => (
  <WoodArt viewBox="0 0 105 624" preserveAspectRatio="none">
    {streaks.map((s, i) => (
      <rect key={i} x={s.x} y="0" width={s.w} height="624" fill={s.light ? '#8f7a60' : '#140b04'} opacity={s.o} />
    ))}
    <g fill="none" stroke="#66533c" strokeWidth="2.5" opacity=".65">
      <path d="M74 624C74 590 82 555 89 550c7 5 15 35 15 74" />
      <path d="M76 540C78 470 84 408 89 403c6 6 14 50 15 110" />
      <path d="M74 390C76 300 84 125 89 118c4 6 14 50 15 100" />
      <path d="M76 0c3 30 14 44 27 60" />
    </g>
  </WoodArt>
);

/* ---------- slides ---------- */
const SIDE_TITLE = 'فصل اول:تاریخچه وسیر تحول برنامه ریزی';

const CourseSlide = ({ zoom }) => (
  <SlideBox $zoom={zoom}>
    <WoodBand>
      <WoodTexture />
      <SideSqueeze $top={33} $mr={4} $sy={0.77}>
        <SideText $fs={34} dir="rtl">{SIDE_TITLE}</SideText>
      </SideSqueeze>
    </WoodBand>
    <SlideBody>
      <TitleWrap>
        <SlideTitle dir="rtl">سیر تکامل برنامه ریزی</SlideTitle>
      </TitleWrap>
      <TopicRow $pl={9}>
        <TopicEn>(Product Oriented )</TopicEn>
        <TopicFa dir="rtl" $mr={38} $sx={0.765}>دوره محصول گرایی</TopicFa>
        <TopicNum>.1</TopicNum>
      </TopicRow>
      <TopicRow $pl={19}>
        <TopicEn>( Market Oriented )</TopicEn>
        <TopicFa dir="rtl" $mr={38} $sx={0.755}>دوره بازار گرایی</TopicFa>
        <TopicNum>.2</TopicNum>
      </TopicRow>
      <TopicRow>
        <TopicFa dir="rtl" $mr={66} $sx={0.725}>دوره فراصنعتی</TopicFa>
        <TopicNum>.3</TopicNum>
      </TopicRow>
    </SlideBody>
  </SlideBox>
);

const PURPLE_BG = `radial-gradient(circle at 1px 1px, #4b1a82 1px, transparent 1.5px) 0 0/7px 5px,
  radial-gradient(circle at 3px 3px, #350a63 1px, transparent 1.5px) 0 0/5px 7px, #3f0c74`;
const YELLOW_ELLIPSE = 'radial-gradient(ellipse at 50% 40%, #ffffa8 0%, #f6f190 60%, #bdb268 100%)';

const GuideSlide = ({ items, top }) => (
  <MiniSlide $bg={PURPLE_BG}>
    <Ellipse $bg={YELLOW_ELLIPSE} $color="#a8781e" $fs={12} dir="rtl">
      <EllipseText $sx={0.77}>راهنمای فصول</EllipseText>
    </Ellipse>
    <BulletList dir="rtl" $top={top}>
      {items.map((item, i) => (
        <BulletItem key={i} $color="#f6ea6c" $fs={7.9} $lh={item.lh ?? 12}>
          <BulletMark $color="#c9a64a" />
          <BulletText>
            {item.text.map(t => <span key={t}>{t}</span>)}
          </BulletText>
        </BulletItem>
      ))}
    </BulletList>
  </MiniSlide>
);

const OverviewSlide = () => (
  <MiniSlide $bg="linear-gradient(145deg, #8a8262 0%, #e9e7ae 22%, #ffffc8 48%, #ffffc4 72%, #8a8566 100%)">
    <Ellipse $bg="radial-gradient(ellipse, #4d3420 0%, #41291a 100%)" $color="#ffff4a" $fs={10.5} dir="rtl">
      <EllipseText $sx={0.73}>{SIDE_TITLE}</EllipseText>
    </Ellipse>
    <BulletList dir="rtl" $top={13} $gap={21}>
      {['سیر تکامل برنامه ریزی', 'گرایشهای برنامه ریزی', 'انواع روشهای برنامه ریزی وسیر تحول آنها'].map(t => (
        <BulletItem key={t} $color="#000" $fs={7} $lh={14} $bold $gap={8}>
          <BulletMark $color="#a58a45" $mt={6} />
          <BulletText>{t}</BulletText>
        </BulletItem>
      ))}
    </BulletList>
  </MiniSlide>
);

const ProductSlide = () => (
  <Mini8Row>
    <PurpleBand>
      <SideSqueeze $top={24} $sy={0.8}>
        <SideText $fs={10} dir="rtl">فصل اول:تاریخچه<br />وسیر تحول برنامه ریزی</SideText>
      </SideSqueeze>
    </PurpleBand>
    <Mini8Body>
      <Mini8Title dir="rtl">دوره محصول گرایی</Mini8Title>
      <Mini8Table dir="rtl">
        <Mini8Cell>دوره محصول گرایی، شروع سالهای ۱۸۲۰ – ۱۸۳۰</Mini8Cell>
        <Mini8Cell $rule $align="right">ویژگیها و مشخصات دوره:</Mini8Cell>
        <Mini8Cell $align="right">- تاکید بر محصول بود.</Mini8Cell>
      </Mini8Table>
    </Mini8Body>
  </Mini8Row>
);

const guide4 = [
  { text: ['فصل پنجم:مروری برفرایندهای برنامه ریزی ومدیریت', 'استراتژیک'] },
  { text: ['فصل ششم :فرایندهای عمومی برنامه ریزی استراتژیک', '(پارادیم  پیش تدبیری)'], lh: 15 },
  { text: ['فصل هفتم :تکنیکهای فرموله کردن استراتژی وتشخیص', 'ماهیت استراتژی اصلی'] },
  { text: ['فصل هشتم :مدلهای ترکیبی برنامه ریزی استراتژیک'] },
];
const guide5 = [
  { text: ['فصل نهم:طراحی استراتژیها در سطح کلان'], lh: 14 },
  { text: ['فصل دهم:تکنیکهای تدوین استراتژیهای وظیفه ای'], lh: 14 },
  { text: ['فصل یازدهم :خطوط راهنمایی شکل گیری استراتژی', '(پارادایم توصیفی )'], lh: 14 },
  { text: ['فصل دوازدهم:پاره ای از روشهای ایده پردازی ونوآوری برای', 'خلق استراتژی'] },
];

const thumbs = [
  { n: '', content: <GuideSlide items={guide4} top={3} /> },
  { n: '5', content: <GuideSlide items={guide5} top={3} /> },
  { n: '6', content: <OverviewSlide /> },
  { n: '7', active: true, content: <CourseSlide zoom={240 / 900} /> },
  { n: '8', content: <ProductSlide /> },
];

const tabs = ['Insert', 'Design', 'Transitions', 'Animations', 'Slide Show', 'Review', 'View', 'Help', 'Foxit PDF'];

export default function App() {
  return (
    <Page>
      <Global />
      <TitleBar>
        <Qat>
          <QatItem $w={15}><SaveIcon /></QatItem>
          <QatItem $w={15} $ml={15}><UndoIcon /></QatItem>
          <QatItem $w={11}><Caret c="#fff" /></QatItem>
          <QatItem $w={15} $ml={9}><RedoIcon /></QatItem>
          <QatItem $w={17} $ml={13}><PresentIcon /></QatItem>
          <QatItem $w={9} $ml={17}><CustomizeIcon /></QatItem>
        </Qat>
        <DocTitle>powerpoint.ppt [Compatibility Mode]  -  PowerPoint</DocTitle>
        <WinControls>
          <SignIn>Sign in</SignIn>
          <WinButton><WinRibbon /></WinButton>
          <WinButton><WinMin /></WinButton>
          <WinButton><WinRestore /></WinButton>
          <WinButton><WinClose /></WinButton>
        </WinControls>
      </TitleBar>

      <TabRow>
        <Tab $mr={8.5} $pad={13.5}>File</Tab>
        <Tab $active $pad={12}>Home</Tab>
        {tabs.map(t => <Tab key={t}>{t}</Tab>)}
        <TellMe><BulbIcon />Tell me what you want to do</TellMe>
        <Share><ShareIcon />Share</Share>
      </TabRow>

      <Ribbon>
        <Group $w={92}>
          <GroupBody>
            <BigButton $w={58}>
              <BigIcon><PasteIcon /></BigIcon>
              <BigText>Paste</BigText>
              <BigText><Caret /></BigText>
            </BigButton>
            <SmallCol $ml={-8}>
              <SmallBtn><SmallIcon $w={22}><CutIcon /></SmallIcon></SmallBtn>
              <SmallBtn><SmallIcon $w={22}><CopyIcon /></SmallIcon><Caret ml={-1} /></SmallBtn>
              <SmallBtn><SmallIcon $w={22}><PainterIcon /></SmallIcon></SmallBtn>
            </SmallCol>
          </GroupBody>
          <GroupLabel $launch>Clipboard<Launch /></GroupLabel>
        </Group>
        <Sep />
        <Group $w={133}>
          <GroupBody>
            <BigButton $w={50} $ml={4}>
              <BigIcon><NewSlideIcon /></BigIcon>
              <BigText>New</BigText>
              <BigText>Slide<Caret /></BigText>
            </BigButton>
            <SmallCol $ml={-2}>
              <SmallBtn $gap={2}><SmallIcon $w={18}><LayoutIcon /></SmallIcon>Layout<Caret ml={-1} /></SmallBtn>
              <SmallBtn $gap={2}><SmallIcon $w={18}><ResetIcon /></SmallIcon>Reset</SmallBtn>
              <SmallBtn $gap={2} $off><SmallIcon $w={18}><SectionIcon /></SmallIcon>Section<Caret c="#bbb" ml={-1} /></SmallBtn>
            </SmallCol>
          </GroupBody>
          <GroupLabel>Slides</GroupLabel>
        </Group>
        <Sep />
        <Group $w={237}>
          <GroupBody $pl={8}>
            <Rows $top={11} $w={225}>
              <ToolRow $h={23} $mb={8}>
                <Combo $w={92}><ChevDown /></Combo>
                <Combo $w={54}><ComboValue>32</ComboValue><ChevDown /></Combo>
                <GrowA dir="up" size={15} />
                <GrowA dir="down" size={12} />
                <RowRule $ml={4} />
                <Cell $w={24} $ml={4}><EraserIcon /></Cell>
              </ToolRow>
              <ToolRow>
                <Cell $w={21} $bold $serif>B</Cell>
                <Cell $w={22} $italic $bold $serif>I</Cell>
                <Cell $w={22} $bold $serif $deco="underline">U</Cell>
                <Cell $w={22} $bold $fs={13} $shadow>S</Cell>
                <Cell $w={22} $deco="line-through" $fs={11}>abc</Cell>
                <Cell $w={22} $fs={11}>AV</Cell>
                <Cell $w={10}><Caret c={Off} /></Cell>
                <Cell $w={20} $fs={13}>Aa</Cell>
                <Cell $w={10}><Caret c={Off} /></Cell>
                <RowRule $ml={9} />
                <Cell $w={24} $fs={15}>A</Cell>
                <Cell $w={10}><Caret c={Off} /></Cell>
              </ToolRow>
            </Rows>
          </GroupBody>
          <GroupLabel $launch>Font<Launch c="#b4b4b4" /></GroupLabel>
        </Group>
        <Sep />
        <Group $w={230}>
          <GroupBody $pl={9}>
            <Rows $top={14} $w={182}>
              <ToolRow $h={16} $mb={15}>
                <Cell $w={18}><BulletsIcon /></Cell>
                <Cell $w={16}><Caret c={Off} /></Cell>
                <Cell $w={17}><NumbersIcon /></Cell>
                <Cell $w={18}><Caret c={Off} /></Cell>
                <Cell $w={24}><OutdentIcon /></Cell>
                <Cell $w={20}><IndentIcon /></Cell>
                <Cell $w={20} $ml={5}><LineSpacingIcon /></Cell>
                <Cell $w={8}><Caret c={Off} /></Cell>
              </ToolRow>
              <ToolRow $h={16}>
                <Cell $w={20}><AlignL /></Cell>
                <Cell $w={24}><AlignC /></Cell>
                <Cell $w={20}><AlignR /></Cell>
                <Cell $w={24}><AlignJ /></Cell>
                <Cell $w={6}><Caret c={Off} /></Cell>
                <Cell $w={20} $ml={12}><LtrIcon /></Cell>
                <Cell $w={24}><RtlIcon /></Cell>
                <Cell $w={24}><ColumnsIcon /></Cell>
                <Cell $w={8}><Caret c={Off} /></Cell>
              </ToolRow>
            </Rows>
            <SmallCol>
              <SmallBtn $gap={4}><SmallIcon><DirIcon /></SmallIcon><Caret c={Off} /></SmallBtn>
              <SmallBtn $gap={4}><SmallIcon><AlignTextIcon /></SmallIcon><Caret c={Off} /></SmallBtn>
              <SmallBtn $gap={4}><SmallIcon><SmartIcon /></SmallIcon><Caret c={Off} /></SmallBtn>
            </SmallCol>
          </GroupBody>
          <GroupLabel $launch>Paragraph<Launch c="#b4b4b4" /></GroupLabel>
        </Group>
        <Sep />
        <Group $w={357}>
          <GroupBody $pl={9}>
            <Gallery>
              <GalleryGrid>
                {shapePaths.map((s, i) => (
                  <svg key={i} width="16" height="15" viewBox="0 0 16 15" fill="none" stroke="#6a6a6a">{s}</svg>
                ))}
              </GalleryGrid>
              <GalleryArrows>
                <GalleryArrow $h={20} $dim><ChevUp c="#bdbdbd" /></GalleryArrow>
                <GalleryArrow $h={20}><ChevDown c="#555" w={13} /></GalleryArrow>
                <GalleryArrow $h={21}>
                  <svg width="13" height="12" viewBox="0 0 13 12" fill="none" stroke="#555"><path d="M0 .5h13M.5 5L6.500 11 12.500 5" /></svg>
                </GalleryArrow>
              </GalleryArrows>
            </Gallery>
            <BigButton $w={42} $ml={4}>
              <BigIcon><ArrangeIcon /></BigIcon>
              <BigText>Arrange</BigText>
              <BigText><Caret /></BigText>
            </BigButton>
            <BigButton $w={42} $ml={3} $off>
              <BigIcon><QuickIcon /></BigIcon>
              <BigText>Quick</BigText>
              <BigText>Styles<Caret c="#bbb" /></BigText>
            </BigButton>
            <SmallCol $ml={2}>
              <SmallBtn $off><SmallIcon $w={18}><FillIcon /></SmallIcon>Shape Fill<Caret c="#bbb" ml={-1} /></SmallBtn>
              <SmallBtn $off><SmallIcon $w={18}><OutlineIcon /></SmallIcon>Shape Outline<Caret c="#bbb" ml={-1} /></SmallBtn>
              <SmallBtn $off><SmallIcon $w={18}><EffectsIcon /></SmallIcon>Shape Effects<Caret c="#bbb" ml={-1} /></SmallBtn>
            </SmallCol>
          </GroupBody>
          <GroupLabel $launch>Drawing<Launch c="#b4b4b4" /></GroupLabel>
        </Group>
        <Sep />
        <Group $w={98}>
          <GroupBody $pl={9}>
            <SmallCol>
              <SmallBtn $gap={1}><SmallIcon><FindIcon /></SmallIcon>Find</SmallBtn>
              <SmallBtn $gap={1}>
                <SmallIcon><AbIcon>ab<AcText>ac</AcText></AbIcon></SmallIcon>Replace<Caret ml={6} />
              </SmallBtn>
              <SmallBtn $gap={1}><SmallIcon><SelectIcon /></SmallIcon>Select<Caret ml={-1} /></SmallBtn>
            </SmallCol>
          </GroupBody>
          <GroupLabel>Editing</GroupLabel>
        </Group>
        <Sep />
        <Collapse><ChevUp /></Collapse>
      </Ribbon>

      <Workspace>
        <SlidePanel>
          <ThumbList>
            <ThumbInner>
              {thumbs.map((t, i) => (
                <ThumbRow key={i}>
                  <NumCol $active={t.active}>
                    <span>{t.n || '\u00a0'}</span>
                    <Star />
                  </NumCol>
                  <ThumbFrame $active={t.active}>{t.content}</ThumbFrame>
                </ThumbRow>
              ))}
            </ThumbInner>
          </ThumbList>
          <VScroll>
            <ScrollBtn><TriUp /></ScrollBtn>
            <ScrollThumb $mt={6} />
            <ScrollSpace />
            <ScrollBtn><TriDown /></ScrollBtn>
          </VScroll>
        </SlidePanel>
        <EditorCol>
          <EditorTop>
            <SlideArea><CourseSlide /></SlideArea>
            <StepBar>
              <ScrollTrack>
                <ScrollBtn><TriUp /></ScrollBtn>
                <ScrollThumb $mt={10} />
                <ScrollSpace />
                <ScrollBtn $plain><TriDown /></ScrollBtn>
              </ScrollTrack>
              <StepBtn><DblUp /></StepBtn>
              <StepBtn><DblDown /></StepBtn>
            </StepBar>
          </EditorTop>
          <NotesBar>Click to add notes</NotesBar>
        </EditorCol>
      </Workspace>

      <StatusBar>
        <StatusText $ml={8}>Slide 7 of 420</StatusText>
        <StatusText $ml={18}><SpellIcon /></StatusText>
        <StatusText $ml={18}>Persian (Iran)</StatusText>
        <StatusPush />
        <StatusText $gap={4}><NotesIcon />Notes</StatusText>
        <StatusText $ml={18} $gap={3}><CommentIcon />Comments</StatusText>
        <ViewGroup $ml={19}>
          <ViewBtn $on><NormalIcon /></ViewBtn>
          <ViewBtn><SorterIcon /></ViewBtn>
          <ViewBtn><ReadingIcon /></ViewBtn>
          <ViewBtn><ShowIcon /></ViewBtn>
        </ViewGroup>
        <StatusText $ml={7}>
          <svg width="9" height="1"><path d="M0 .5h9" stroke="#555" /></svg>
          <ZoomTrack><ZoomThumb /><ZoomTick /></ZoomTrack>
          <svg width="9" height="9"><path d="M0 4.500h9M4.500 0v9" stroke="#555" /></svg>
        </StatusText>
        <StatusText $ml={12}>87 %</StatusText>
        <FitSlot><FitIcon /></FitSlot>
      </StatusBar>
    </Page>
  );
}
